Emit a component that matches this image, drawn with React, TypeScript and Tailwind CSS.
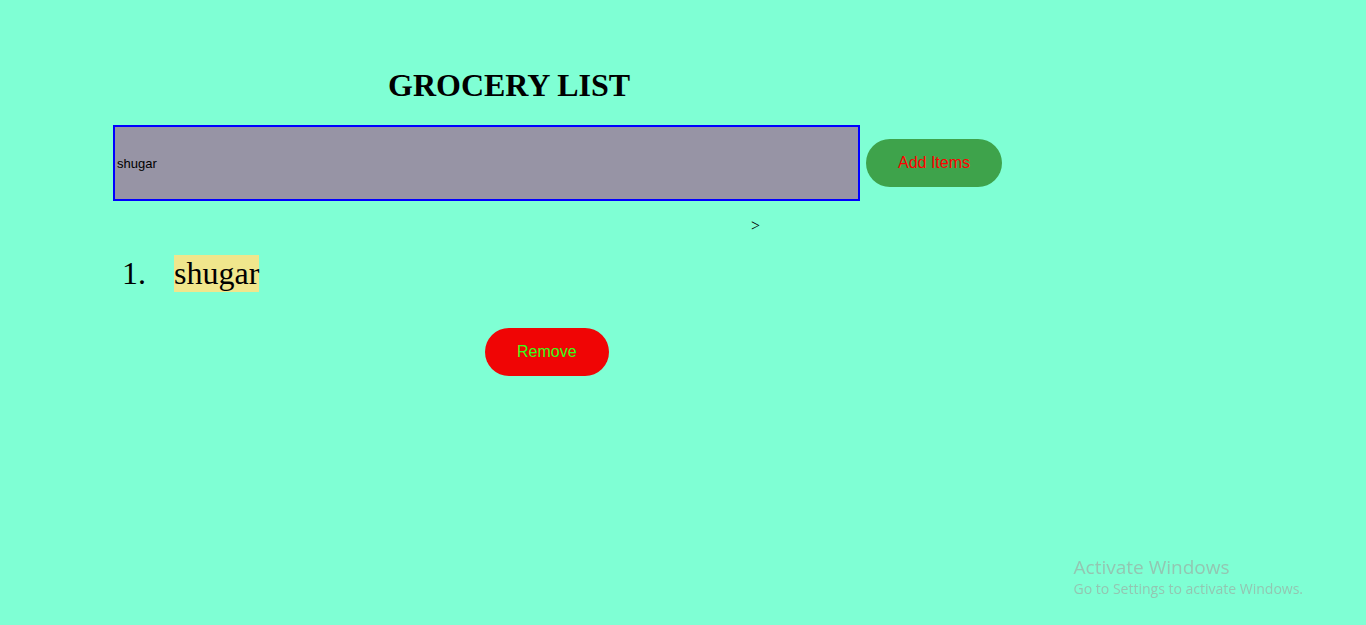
import React, { useState } from "react";

export default function App() {
  const [item, setItem] = useState("shugar");
  const [items, setItems] = useState<string[]>(["shugar"]);

  return (
    <div className="min-h-screen bg-[#7fffd4] px-[113px] pt-[67px] font-['Liberation_Serif',serif] text-black">
      <main>
        <h1 className="pl-[275px] text-[32px] leading-[37px] font-bold">GROCERY LIST</h1>
        <form
          className="mt-[21px] flex w-full max-w-[889px] items-baseline gap-1.5"
          onSubmit={(e) => {
            e.preventDefault();
            setItems([...items, item]);
          }}
        >
          <input
            type="text"
            aria-label="Grocery item"
            value={item}
            onChange={(e) => setItem(e.target.value)}
            className="h-[76px] min-w-0 flex-1 border-2 border-[#0000ff] bg-[#9794a5] px-0.5 font-['Liberation_Sans',sans-serif] text-[13px] outline-none"
          />
          <button
            type="submit"
            className="h-12 shrink-0 rounded-full bg-[#3ea34b] px-8 font-['Liberation_Sans',sans-serif] text-base text-[#ff0000]"
          >
            Add Items
          </button>
        </form>
        <p className="mt-4 pl-[638px] text-base leading-[18px]">&gt;</p>
        <ol className="mt-5">
          {items.map((name, i) => (
            <li key={i} className="flex gap-7 pl-[9px] text-[32px] leading-[37px]">
              <span>{i + 1}.</span>
              <span className="bg-[#f0e68c]">{name}</span>
            </li>
          ))}
        </ol>
        <button
          type="button"
          onClick={() => setItems(items.slice(0, -1))}
          className="mt-9 ml-[372px] h-12 rounded-full bg-[#f00505] px-8 font-['Liberation_Sans',sans-serif] text-base text-[#33ff1a]"
        >
          Remove
        </button>
      </main>
      <aside className="fixed right-[63px] bottom-[26px] font-['Open_Sans',sans-serif] text-[#93c6b2]">
        <p className="text-[19px] leading-6">Activate Windows</p>
        <p className="text-sm leading-5">Go to Settings to activate Windows.</p>
      </aside>
    </div>
  );
}
